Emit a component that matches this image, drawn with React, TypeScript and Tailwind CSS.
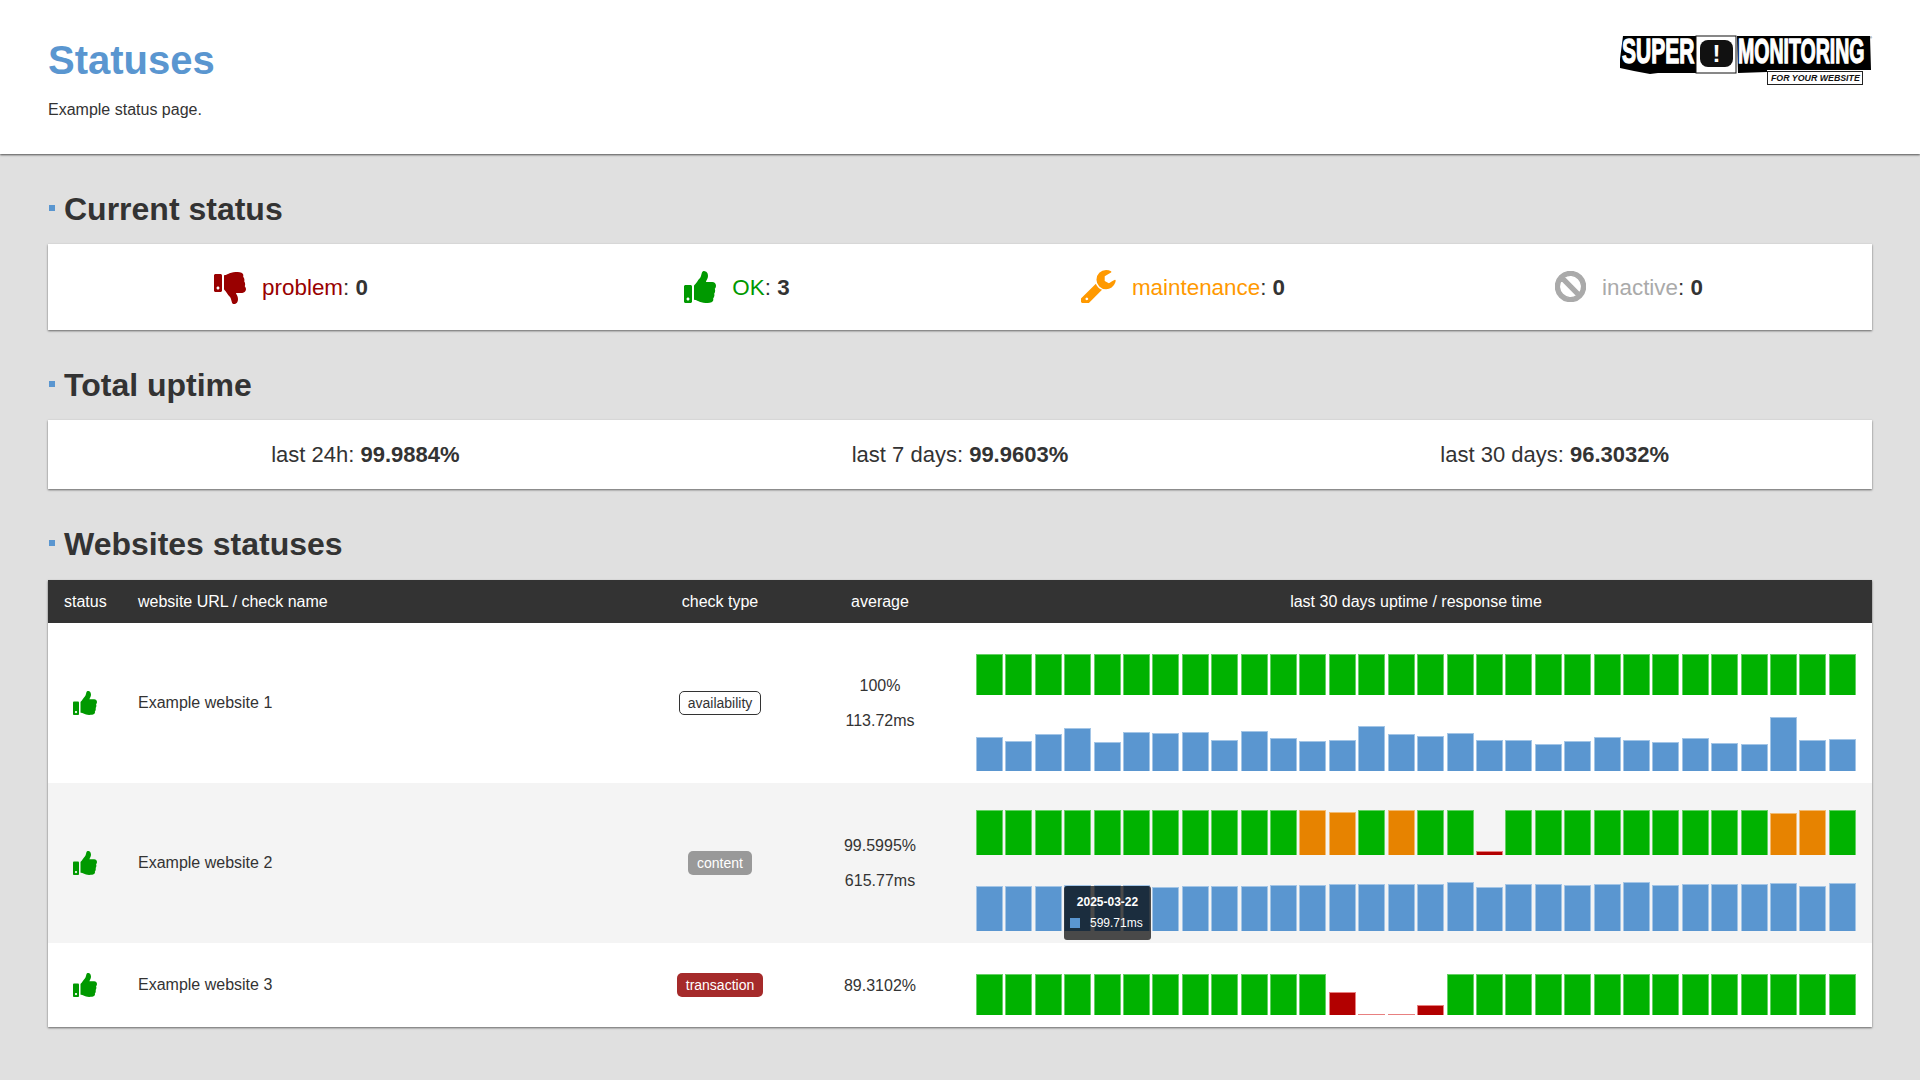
import { FaBan, FaThumbsDown, FaThumbsUp } from 'react-icons/fa'

type Kind = 'g' | 'o' | 'r' | 'b'

const G = 41
const G2 = 45

const rowOneUptime: number[] = Array(30).fill(G)
const rowOneResponse = [
  34, 30, 36.7, 42.7, 29.3, 39.3, 38, 38.7, 31, 39.7, 33, 29.7, 30.7, 44.7, 37.5, 35, 38.3, 30.7, 31,
  27, 29.7, 34.3, 31, 29, 33, 27.7, 26.7, 54, 31, 32.3,
]
const rowTwoUptime: [Kind, number][] = [
  ...Array.from({ length: 11 }, (): [Kind, number] => ['g', G2]),
  ['o', 44.7],
  ['o', 42.7],
  ['g', G2],
  ['o', 45],
  ['g', G2],
  ['g', G2],
  ['r', 4],
  ...Array.from({ length: 9 }, (): [Kind, number] => ['g', G2]),
  ['o', 42.3],
  ['o', 45],
  ['g', G2],
]
const rowTwoResponse = [
  44.7, 44.7, 45.3, 45.7, 45.7, 46.3, 44, 44.7, 45, 44.7, 46, 46, 46.7, 47, 47, 47.3, 48.7, 44, 46.7, 46.7,
  46.3, 47, 49, 46.3, 47, 47.3, 47.3, 47.7, 45.3, 47.7,
]
const rowThreeUptime: [Kind, number][] = [
  ...Array.from({ length: 12 }, (): [Kind, number] => ['g', G]),
  ['r', 23],
  ['r', 1],
  ['r', 1],
  ['r', 9.7],
  ...Array.from({ length: 14 }, (): [Kind, number] => ['g', G]),
]

const barStyles: Record<Kind, string> = {
  g: 'bg-[#00b200] border-[#66d166]',
  o: 'bg-[#e78300] border-[#f2bb73]',
  r: 'bg-[#b20000] border-[#e88080]',
  b: 'bg-[#5a96d0] border-[#a3c5e6]',
}

function Bars({ items, height }: { items: [Kind, number][]; height: number }) {
  return (
    <div className="flex items-end gap-[2.4px]" style={{ height }}>
      {items.map(([kind, h], i) => (
        <div
          key={i}
          className={`flex-1 border-x border-t ${barStyles[kind]}`}
          style={{ height: h }}
        />
      ))}
    </div>
  )
}

function WrenchIcon() {
  return (
    <svg viewBox="128 128 1598 1536" className="h-[33px] w-[35px] fill-[#ff9900]">
      <path d="M448 1472q0-26-19-45t-45-19-45 19-19 45 19 45 45 19 45-19 19-45zm644-420l-682 682q-37 37-90 37-52 0-91-37l-106-108q-38-36-38-90 0-53 38-91l681-681q39 98 114.5 173.5t173.5 114.5zm634-435q0 39-23 106-47 134-164.5 217.5t-258.5 83.5q-185 0-316.5-131.5t-131.5-316.5 131.5-316.5 316.5-131.5q58 0 121.5 16.5t107.5 46.5q16 11 16 28t-16 28l-293 169v224l193 107q5-3 79-48.5t135.5-81 70.5-35.5q15 0 23.5 10t8.5 25z" />
    </svg>
  )
}

function Logo() {
  return (
    <svg viewBox="0 0 252 50" className="h-[50px] w-[252px] overflow-visible">
      {/* black backing: shows between the letters and as the drop shadow below them */}
      <polygon points="3,1 76,1 76,38 38,38 30,39 14,36 0,33 0,24" fill="#000" />
      <polygon points="117,1 250,1 251,35 147,35 147,37 118,38" fill="#000" />
      <text
        transform="translate(2 28) scale(0.6 1)"
        fontFamily="Liberation Sans"
        fontWeight="700"
        fontSize="35"
        fill="#fff"
        stroke="#fff"
        strokeWidth="1.4"
      >
        SUPER
      </text>
      <rect x="76" y="1" width="40" height="37" fill="#fff" stroke="#111" strokeWidth="1" />
      <rect x="80" y="5" width="33" height="27" rx="8" fill="#111" />
      <text x="96.5" y="27" textAnchor="middle" fontFamily="Liberation Sans" fontWeight="700" fontSize="24" fill="#fff">
        !
      </text>
      <text
        transform="translate(118 28) scale(0.558 1)"
        fontFamily="Liberation Sans"
        fontWeight="700"
        fontSize="35"
        fill="#fff"
        stroke="#fff"
        strokeWidth="1.4"
      >
        MONITORING
      </text>
      <text x="249" y="4" fontFamily="Liberation Sans" fontSize="4" fill="#111">
        ®
      </text>
      <rect x="147.5" y="36.5" width="95" height="13" fill="#fff" stroke="#222" strokeWidth="1" />
      <text
        x="151"
        y="46"
        fontFamily="Liberation Sans"
        fontWeight="700"
        fontStyle="italic"
        fontSize="8.8"
        fill="#111"
      >
        FOR YOUR WEBSITE
      </text>
    </svg>
  )
}

function Heading({ children }: { children: string }) {
  return (
    <h2 className="mt-9 mb-4 flex h-[38px] items-start gap-[9px] text-[32px] leading-[38px] font-bold text-[#333]">
      <span className="mt-[15px] ml-px size-1.5 bg-[#5a96d0]" />
      {children}
    </h2>
  )
}

function Status({ icon, label, color, value }: { icon: React.ReactNode; label: string; color: string; value: number }) {
  return (
    <div className="flex items-center justify-center gap-4 text-[22.4px]">
      {icon}
      <span className="pt-0.5">
        <span className={color}>{label}</span>: <b>{value}</b>
      </span>
    </div>
  )
}

function Uptime({ label, value }: { label: string; value: string }) {
  return (
    <div className="text-center text-[22px]">
      {label}: <b>{value}</b>
    </div>
  )
}

function Row({
  name,
  badge,
  lines,
  striped,
  height,
  chart,
}: {
  name: string
  badge: React.ReactNode
  lines: string[]
  striped?: boolean
  height: number
  chart: React.ReactNode
}) {
  return (
    <div
      className={`grid grid-cols-[74px_518px_160px_160px_912px] items-center ${striped ? 'bg-[#f4f4f4]' : 'bg-white'}`}
      style={{ height }}
    >
      <div className="flex justify-center pb-px">
        <FaThumbsUp className="size-6 text-[#009900]" />
      </div>
      <div className="pl-4">{name}</div>
      <div className="flex justify-center">{badge}</div>
      <div className="text-center">
        {lines.map((l) => (
          <div key={l} className="h-[35px] leading-[35px]">
            {l}
          </div>
        ))}
      </div>
      {chart}
    </div>
  )
}

export default function App() {
  return (
    <div className="min-h-screen bg-[#e0e0e0] pb-[53px] font-['Liberation_Sans',Arial,sans-serif] text-base text-[#333]">
      <header className="relative flex h-[154px] justify-between bg-white px-12 pt-9 shadow-[0_1px_2px_rgba(0,0,0,0.65)]">
        <div>
          <h1 className="text-[40px] leading-[48px] font-bold text-[#5a96d0]">Statuses</h1>
          <p className="mt-[14px] leading-6">Example status page.</p>
        </div>
        <div className="-mt-px">
          <Logo />
        </div>
      </header>

      <main className="px-12">
        <Heading>Current status</Heading>
        <section className="grid h-[86px] grid-cols-4 items-center bg-white px-5 shadow-[0_1px_2px_rgba(0,0,0,0.55)]">
          <Status
            icon={<FaThumbsDown className="mt-0.5 size-8 text-[#990000]" />}
            label="problem"
            color="text-[#990000]"
            value={0}
          />
          <Status
            icon={<FaThumbsUp className="size-8 text-[#009900]" />}
            label="OK"
            color="text-[#009900]"
            value={3}
          />
          <Status icon={<WrenchIcon />} label="maintenance" color="text-[#ff9900]" value={0} />
          <Status
            icon={<FaBan className="size-[31px] text-[#aaaaaa]" stroke="currentColor" strokeWidth={24} />}
            label="inactive"
            color="text-[#aaaaaa]"
            value={0}
          />
        </section>

        <Heading>Total uptime</Heading>
        <section className="grid h-[69px] grid-cols-3 items-center bg-white px-5 shadow-[0_1px_2px_rgba(0,0,0,0.55)]">
          <Uptime label="last 24h" value="99.9884%" />
          <Uptime label="last 7 days" value="99.9603%" />
          <Uptime label="last 30 days" value="96.3032%" />
        </section>

        <Heading>Websites statuses</Heading>
        <section className="mt-[17px] shadow-[0_1px_2px_rgba(0,0,0,0.55)]">
          <div className="grid h-[43px] grid-cols-[74px_518px_160px_160px_912px] items-center bg-[#333] text-white">
            <div className="pl-4">status</div>
            <div className="pl-4">website URL / check name</div>
            <div className="text-center">check type</div>
            <div className="text-center">average</div>
            <div className="text-center">last 30 days uptime / response time</div>
          </div>

          <Row
            name="Example website 1"
            height={160}
            lines={['100%', '113.72ms']}
            badge={
              <span className="rounded-[5px] border border-[#333] px-2 text-sm leading-[22px]">availability</span>
            }
            chart={
              <div className="flex h-full flex-col justify-end gap-5 px-4 pb-3">
                <Bars items={rowOneUptime.map((h): [Kind, number] => ['g', h])} height={41} />
                <Bars items={rowOneResponse.map((h): [Kind, number] => ['b', h])} height={56} />
              </div>
            }
          />
          <Row
            name="Example website 2"
            height={160}
            striped
            lines={['99.5995%', '615.77ms']}
            badge={<span className="rounded-[5px] bg-[#999] px-[9px] text-sm leading-6 text-white">content</span>}
            chart={
              <div className="relative flex h-full flex-col justify-end gap-5 px-4 pb-3">
                <Bars items={rowTwoUptime} height={45} />
                <Bars items={rowTwoResponse.map((h): [Kind, number] => ['b', h])} height={56} />
                <div className="absolute top-[103px] left-[104px] h-[54px] w-[87px] rounded-[3px] bg-black/70 text-xs text-white">
                  <div className="mt-[9px] text-center leading-[14px] font-bold">2025-03-22</div>
                  <div className="mt-[7px] flex items-center pl-[6px]">
                    <span className="size-[10px] bg-[#5a96d0]" />
                    <span className="ml-[10px] leading-[14px]">599.71ms</span>
                  </div>
                </div>
              </div>
            }
          />
          <Row
            name="Example website 3"
            height={84}
            lines={['89.3102%']}
            badge={<span className="rounded-[5px] bg-[#a52a2a] px-[9px] text-sm leading-6 text-white">transaction</span>}
            chart={
              <div className="flex h-full flex-col justify-end px-4 pb-3">
                <Bars items={rowThreeUptime} height={41} />
              </div>
            }
          />
        </section>
      </main>
    </div>
  )
}
